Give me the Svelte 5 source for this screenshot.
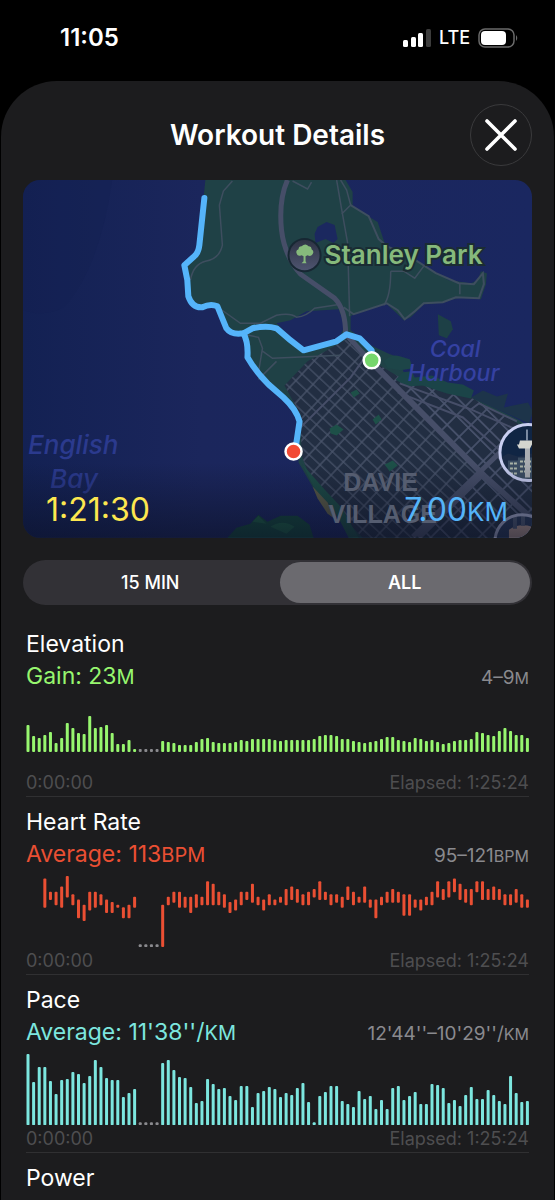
<script>
  let range = 'all';

  const step = 5.6;
  const chartHeight = 71;
  const barX = (i) => 2 + i * step;

  // zeros are pauses in the recording
  const elevation = [
    27, 16, 14, 17, 20, 9, 14, 29, 24, 19, 18, 36, 24, 25, 27, 19, 8, 8, 12, 3,
    0, 0, 0, 0, 11, 10, 9, 7, 7, 7, 10, 13, 14, 10, 9, 9, 9, 10, 12, 11,
    13, 13, 13, 13, 12, 11, 12, 12, 12, 12, 12, 13, 16, 17, 17, 16, 13, 13, 11, 10,
    9, 10, 11, 13, 15, 15, 12, 11, 10, 14, 13, 11, 12, 10, 8, 9, 11, 12, 12, 13,
    20, 19, 17, 16, 21, 24, 21, 17, 17, 14
  ];

  const pace = [
    71, 43, 58, 58, 44, 31, 45, 46, 53, 51, 42, 49, 65, 58, 47, 45, 45, 28, 32, 36,
    0, 0, 0, 0, 62, 65, 55, 48, 47, 38, 22, 24, 46, 41, 36, 37, 29, 25, 39, 39,
    18, 32, 34, 38, 36, 28, 32, 30, 37, 42, 23, 3, 29, 33, 39, 39, 24, 21, 18, 34,
    26, 29, 16, 25, 16, 37, 39, 25, 29, 33, 21, 21, 41, 40, 37, 22, 25, 19, 30, 38,
    26, 26, 35, 30, 24, 21, 49, 32, 23, 24
  ];

  // [highest, lowest] steps below the top of the scale, null when there is no reading
  const heart = [
    null, null, null, [1, 12], [6, 9], [6, 11], [4, 12], [0, 8], [7, 11], [9, 16],
    [11, 17], [6, 13], [6, 12], [7, 11], [9, 14], [10, 14], [11, 12], [12, 16], [11, 16], [8, 12],
    0, 0, 0, 0, [11, 27], [8, 11], [6, 10], [6, 12], [8, 12], [8, 14],
    [7, 12], [8, 11], [2, 11], [3, 11], [6, 11], [7, 12], [10, 14], [9, 13], [6, 11], [6, 9],
    [3, 10], [8, 11], [9, 13], [7, 11], [9, 11], [8, 10], [5, 11], [4, 9], [5, 10], [7, 11],
    [6, 11], [5, 8], [2, 9], [6, 9], [7, 11], [7, 10], [8, 12], [4, 9], [6, 11], [8, 10],
    [4, 10], [9, 12], [9, 16], [8, 11], [6, 10], [5, 10], [6, 10], [7, 15], [7, 15], [9, 12],
    [9, 13], [8, 11], [6, 11], [2, 8], [5, 9], [2, 8], [1, 6], [3, 9], [5, 10], [5, 11],
    [2, 6], [2, 9], [5, 9], [4, 9], [5, 9], [7, 11], [7, 11], [5, 10], [7, 12], [9, 12]
  ];

  const fromBase = (values, base) =>
    values.map((h, i) => ({ x: barX(i), y: base - (h || 3), h: h || 3, gap: h === 0 }));

  const fromRange = (values) =>
    values
      .map((v, i) => {
        if (v === null) return null;
        if (v === 0) return { x: barX(i), y: chartHeight - 3, h: 3, gap: true };
        return { x: barX(i), y: v[0] * 2.6, h: (v[1] - v[0]) * 2.6 + 0.6, gap: false };
      })
      .filter((bar) => bar);

  const metrics = [
    { name: 'Elevation', kind: 'elevation', label: 'Gain: 23', unit: 'M', range: '4–9', rangeUnit: 'M', bars: fromBase(elevation, 54) },
    { name: 'Heart Rate', kind: 'heart', label: 'Average: 113', unit: 'BPM', range: '95–121', rangeUnit: 'BPM', bars: fromRange(heart) },
    { name: 'Pace', kind: 'pace', label: "Average: 11'38''/", unit: 'KM', range: "12'44''–10'29''/", rangeUnit: 'KM', bars: fromBase(pace, chartHeight) }
  ];
</script>

<div class="screen">
  <header class="status">
    <span class="clock">11:05</span>
    <div class="indicators">
      <svg width="28" height="18" viewBox="0 0 28 18" aria-hidden="true">
        <rect x="0" y="11" width="5" height="7" rx="1.5" fill="#fff" />
        <rect x="8" y="8" width="5" height="10" rx="1.5" fill="#fff" />
        <rect x="15" y="4" width="5" height="14" rx="1.5" fill="#fff" />
        <rect x="23" y="0" width="5" height="18" rx="1.5" fill="#3c3c3c" />
      </svg>
      <span class="network">LTE</span>
      <svg width="40" height="20" viewBox="0 0 40 20" aria-hidden="true">
        <rect x="1" y="1" width="35" height="18" rx="6" fill="none" stroke="#6a6a6a" stroke-width="1.5" />
        <rect x="3" y="3" width="25" height="14" rx="4" fill="#fff" />
        <path d="M38 7q2.500 3 0 6z" fill="#6a6a6a" />
      </svg>
    </div>
  </header>

  <main class="sheet">
    <div class="title-bar">
      <h1>Workout Details</h1>
      <button class="close" aria-label="Close">
        <svg width="32" height="32" viewBox="0 0 32 32" aria-hidden="true">
          <path d="M2 2l28 28M30 2L2 30" stroke="#fff" stroke-width="3.600" stroke-linecap="round" />
        </svg>
      </button>
    </div>

    <section class="map">
      <svg class="map-art" viewBox="23 180 508 357" role="img" aria-label="Route map">
        <defs>
          <linearGradient id="sea" x1="0" y1="0" x2="1" y2="0">
            <stop offset="0" stop-color="#132153" />
            <stop offset="0.35" stop-color="#1b265c" />
            <stop offset="1" stop-color="#1a2760" />
          </linearGradient>
          <linearGradient id="shade" x1="0" y1="0" x2="0" y2="1">
            <stop offset="0" stop-color="#0b1024" stop-opacity="0" />
            <stop offset="1" stop-color="#0b1024" stop-opacity="0.6" />
          </linearGradient>
          <linearGradient id="pin" x1="0" y1="0" x2="0" y2="1">
            <stop offset="0" stop-color="#2e3344" />
            <stop offset="1" stop-color="#4e5470" />
          </linearGradient>
          <pattern id="streets" width="15" height="9" patternUnits="userSpaceOnUse" patternTransform="translate(283 392) rotate(43)">
            <path d="M0 1H15M1 0V9" stroke="#4a556c" stroke-width="1.300" fill="none" />
          </pattern>
          <pattern id="blocks" width="17" height="13" patternUnits="userSpaceOnUse" patternTransform="translate(377 372) rotate(45)">
            <path d="M0 1H17M1 0V13" stroke="#4b556f" stroke-width="1.600" fill="none" />
          </pattern>
          <clipPath id="lookout"><circle cx="527" cy="452" r="28" /></clipPath>
          <clipPath id="stadium"><circle cx="521" cy="541" r="26" /></clipPath>
        </defs>

        <rect x="23" y="180" width="508" height="357" fill="url(#sea)" />
        <path d="M23 180H112Q100 265 66 305Q48 318 23 310z" fill="#132153" opacity="0.4" />

        <path
          d="M205 180L203 200L198 250L183 266L188 299Q192 310 205 307Q218 303 220 312L228 330L243 334L248 358L270 387L295 410L298 440L298 462L313 488L330 508L353 537H531V428L519 420L503 412L470 396L447 385L413 382L403 372L397 357L387 353L370 345L350 330L350 316L357 312L385 303L397 314L403 320L410 317L423 304L442 302L460 297L480 299L485 284L486 273L480 271L477 280L470 283L448 280L423 265L405 252L385 246L377 222L352 207L352 192L345 180z"
          fill="#1f4146"
        />
        <path d="M284 385L307 361L346 339L372 361L411 384L447 387L472 398L531 431V537H362L334 508L310 478L301 455L300 414z" fill="#222e42" />
        <path d="M284 385L307 361L346 339L372 361L479 472L415 537H362L334 508L310 478L301 455L300 414z" fill="url(#streets)" />
        <path d="M372 361L411 384L447 387L472 398L531 431V537H415L479 472z" fill="url(#blocks)" />
        <path d="M302 464L315 490L332 506L348 537L358 537L341 507L324 489z" fill="#1d4c46" />
        <path d="M312 486l5 12l10 15l7 5l-7-16z" fill="#5b5c48" />
        <path d="M329 428l7-4l7 5l-7 6l-6-2zM372 419l6-5l3 5l-6 5zM350 392l6-3l3 4l-6 4zM384 464l8-4l5 5l-8 6z" fill="#1d5048" />
        <path d="M402 372l9-1l3 6l17-2l16 7l15 2l11 6l-3 8l-24-5l-24-8l-17 1l-10-7z" fill="#1b4448" />
        <path d="M470 397l12-7l14 6l11-3l-4 14l24-5l5 9l-4 12z" fill="#1d344a" />
        <path d="M383 361q8-8 16-5l10 3l3 9l-12 2l-13-2z" fill="#1d4548" />

        <path d="M276 323L290 320L306 311L338 309L344 325L340 335L332 342L305 348L296 345L289 336z" fill="#1b285f" />
        <path d="M314 234L317 227L326 222L334 225L337 239L333 243L325 239L315 243z" fill="#1b285f" />
        <path d="M437 314L450 321L452 329L446 338L438 335z" fill="#1d4046" />
        <path d="M227 537L236 527L250 523L258 514L267 521L280 515L297 515L309 524L313 537z" fill="#14463c" />
        <path d="M270 526q12-8 24 0l-8 7zM252 521l6-6l8 8z" fill="#1c5a43" />

        <g fill="none" stroke="#3e4e5f" stroke-width="1.500">
          <path d="M232 181L223 191L219 205L222 245Q219 259 205 261Q193 264 190 280" />
          <path d="M219 308L240 323L260 323L276 315Q290 312 296 317Q306 316 314 308L340 304" />
          <path d="M243 334L258 337L262 348L258 372L267 385M261 350L272 358L340 355M258 379L276 361" />
          <path d="M336 180L341 209L347 243L349 316M341 214L350 205L346 190L340 180" />
          <path d="M350 205L368 216L378 239L386 246" stroke-width="2" />
          <path d="M390 271Q390 296 383 305M390 271L403 271L414 278L423 266M459 283L459 294" />
          <path d="M386 246L410 257L435 273L458 283L473 284L482 273L483 284L478 298L455 297L442 302L423 303L414 311L404 319L397 310L386 303L353 314L343 307" stroke-width="2" />
          <path d="M292 181l15 8l4-7" />
        </g>
        <g fill="none" stroke="#464e68">
          <path d="M287 180Q278 200 281 230Q284 256 300 274L334 298Q345 309 345 334L371 362" stroke-width="5" />
          <path d="M371 362L484 476L531 518" stroke-width="6" />
          <path d="M527 425L412 536M484 472L418 537" stroke-width="5" />
          <path d="M399 383L470 409L531 436M397 392L462 417L499 450M300 427L350 377L365 356M470 409L478 403L516 421" stroke-width="2" />
        </g>

        <path
          d="M204 198L199 245Q198 253 194 256L184 265L187 280L188 296Q192 308 202 307Q210 303 217 306Q221 316 226 328Q231 335 243 333L252 328Q266 325 276 328Q288 339 303 350L336 341L346 334L359 338L371 350V358"
          class="route"
        />
        <path d="M243 333Q248 342 247 357Q255 371 268 384L283 397Q296 409 299 421L295 448" class="route" />
        <circle cx="371" cy="360" r="8" fill="#76d66c" stroke="#fff" stroke-width="2.500" />
        <circle cx="293" cy="451" r="8" fill="#f24b35" stroke="#fff" stroke-width="2.500" />

        <circle cx="304" cy="255" r="17" fill="#172733" />
        <circle cx="304" cy="255" r="15" fill="url(#pin)" />
        <path
          d="M303 256l-2-1q-4 2-5-2q-1-3 2-4q0-3 3-3q4-3 7 0q3 0 3 3q3 2 1 5q-2 3-5 1l-2 1v5l1 2h-5l2-2z"
          fill="#86b97c"
        />
        <text x="324" y="264" class="park">Stanley Park</text>
        <g class="water">
          <text x="28" y="453">English</text>
          <text x="50" y="487">Bay</text>
        </g>
        <g class="water harbour">
          <text x="429" y="357">Coal</text>
          <text x="407" y="381">Harbour</text>
        </g>
        <g clip-path="url(#lookout)">
          <circle cx="527" cy="452" r="28" fill="#102544" />
          <path d="M498 458l9-5l10 3l14-3v30h-33z" fill="#1b2b46" />
          <path d="M507 460h10v-3h16v24h-26z" fill="#3b4d62" />
          <path d="M509 463h8M509 468h8M509 473h8M519 461h12M519 466h12M519 471h12" stroke="#aab4a8" stroke-width="2" stroke-dasharray="3 1" />
          <path d="M524 447h5v30h-5z" fill="#a9adb2" />
          <path d="M526 429v11" stroke="#9eabc0" stroke-width="1.500" />
          <path d="M519 440h12v3l3 1h-16zM516 444h15l-2 4h-11z" fill="#d4d5cf" />
        </g>
        <circle cx="527" cy="452" r="28" fill="none" stroke="#c8cef0" stroke-width="3" />
        <g clip-path="url(#stadium)">
          <circle cx="521" cy="541" r="26" fill="#283858" />
          <path d="M508 537v-8q10-7 23-3v11z" fill="#a98f89" />
          <path d="M514 515v13M522 515v10" stroke="#49556f" stroke-width="4" />
        </g>
        <circle cx="521" cy="541" r="27" fill="none" stroke="#9da3c2" stroke-width="3" />
        <rect x="23" y="462" width="508" height="75" fill="url(#shade)" />
        <g class="district">
          <text x="380" y="490">DAVIE</text>
          <text x="382" y="522">VILLAGE</text>
        </g>
      </svg>
      <div class="totals">
        <span class="duration">1:21:30</span>
        <span class="distance">7.00<small>KM</small></span>
      </div>
    </section>

    <div class="segments" role="group" aria-label="Chart range">
      <button class:selected={range === '15'} aria-pressed={range === '15'} on:click={() => (range = '15')}>15 MIN</button>
      <button class:selected={range === 'all'} aria-pressed={range === 'all'} on:click={() => (range = 'all')}>ALL</button>
    </div>

    <div class="metrics">
      {#each metrics as metric}
        <section class="metric {metric.kind}">
          <h2>{metric.name}</h2>
          <div class="summary">
            <span class="value">{metric.label}<small>{metric.unit}</small></span>
            <span class="range">{metric.range}<small>{metric.rangeUnit}</small></span>
          </div>
          <svg class="chart" viewBox="0 0 502 {chartHeight}" role="img" aria-label="{metric.name} chart">
            {#each metric.bars as bar}
              <rect class:gap={bar.gap} x={bar.x - 1.5} y={bar.y} width="3" height={bar.h} rx="1" />
            {/each}
          </svg>
          <div class="times">
            <span>0:00:00</span>
            <span>Elapsed: 1:25:24</span>
          </div>
        </section>
      {/each}
      <section class="metric">
        <h2>Power</h2>
      </section>
    </div>
  </main>
</div>

<style>
  :global(body) {
    background: #000;
  }

  .screen {
    display: flex;
    flex-direction: column;
    min-height: 100vh;
    font-family: Inter, 'Liberation Sans', sans-serif;
    color: #fff;
    background: #000;
  }

  .status {
    display: flex;
    justify-content: space-between;
    box-sizing: border-box;
    height: 81px;
    padding: 23px 37px 0 60px;
  }

  .clock {
    font-size: 24px;
    font-weight: 600;
    line-height: 30px;
  }

  .indicators {
    display: flex;
    align-items: center;
    gap: 8px;
    height: 30px;
  }

  .network {
    font-size: 18px;
    font-weight: 500;
    line-height: 30px;
  }

  .sheet {
    flex: 1;
    margin: 0 1px;
    padding: 23px 22px 0;
    border-radius: 56px 56px 0 0;
    background: #1c1c1e;
  }

  .title-bar {
    display: grid;
    grid-template-columns: 1fr auto 1fr;
    align-items: center;
    margin-bottom: 14px;
  }

  h1 {
    grid-column: 2;
    margin: 0;
    font-size: 28px;
    font-weight: 600;
    line-height: 34px;
  }

  .close {
    display: grid;
    place-items: center;
    justify-self: end;
    box-sizing: border-box;
    width: 62px;
    height: 62px;
    padding: 0;
    border: 1px solid #3a3a3c;
    border-radius: 50%;
    background: #1c1c1e;
    cursor: pointer;
  }

  .map {
    display: grid;
    overflow: hidden;
    border-radius: 17px;
  }

  .map-art {
    grid-area: 1 / 1;
    display: block;
    width: 100%;
  }

  .route {
    fill: none;
    stroke: #55b4fa;
    stroke-width: 6;
    stroke-linecap: round;
    stroke-linejoin: round;
  }

  .park {
    font-size: 26px;
    font-weight: 600;
    fill: #86b97c;
    stroke: #1a2c33;
    stroke-width: 4;
    paint-order: stroke;
  }

  .water {
    font-size: 26px;
    font-style: italic;
    font-weight: 500;
    fill: #2b3a8e;
  }

  .harbour {
    font-size: 23px;
    fill: #3541a2;
  }

  .district {
    font-family: 'Liberation Sans', sans-serif;
    font-size: 25px;
    font-weight: 700;
    text-anchor: middle;
    fill: #555d70;
  }

  .totals {
    grid-area: 1 / 1;
    align-self: end;
    display: flex;
    justify-content: space-between;
    padding: 0 24px 6px 23px;
    font-size: 32px;
    font-weight: 400;
    line-height: 40px;
  }

  .totals small {
    font-size: 26px;
  }

  .duration {
    color: #fde74f;
  }

  .distance {
    color: #55b4fa;
  }

  .segments {
    display: grid;
    grid-template-columns: 1fr 1fr;
    gap: 4px;
    margin-top: 22px;
    padding: 2px;
    border-radius: 23px;
    background: #323136;
  }

  .segments button {
    height: 41px;
    padding: 0;
    border: 0;
    border-radius: 21px;
    background: none;
    color: #fff;
    font-family: inherit;
    font-size: 18px;
    font-weight: 500;
    cursor: pointer;
  }

  .segments .selected {
    background: #6b6a6f;
    font-weight: 600;
  }

  .metrics {
    margin-top: 14px;
    padding: 0 3px;
  }

  .metric {
    padding-top: 9px;
    border-bottom: 1px solid #303032;
  }

  .metric:last-child {
    padding-bottom: 5px;
    border-bottom: 0;
  }

  h2 {
    margin: 0;
    font-size: 23px;
    font-weight: 400;
    line-height: 32px;
  }

  .summary {
    display: flex;
    justify-content: space-between;
    align-items: baseline;
    margin-bottom: 4px;
    line-height: 32px;
  }

  .value {
    font-size: 23px;
  }

  .value small {
    font-size: 20px;
  }

  .range {
    font-size: 19px;
    color: #8a8a8e;
  }

  .range small {
    font-size: 16px;
  }

  .chart {
    display: block;
    width: 100%;
  }

  .elevation {
    color: #97f66f;
  }

  .heart {
    color: #ea4f33;
  }

  .pace {
    color: #7ce6df;
  }

  .metric h2 {
    color: #fff;
  }

  .chart rect {
    fill: currentColor;
  }

  .chart .gap {
    fill: #8a8a8e;
  }

  .times {
    display: flex;
    justify-content: space-between;
    font-size: 18px;
    line-height: 27px;
    color: #4e4e50;
  }
</style>
